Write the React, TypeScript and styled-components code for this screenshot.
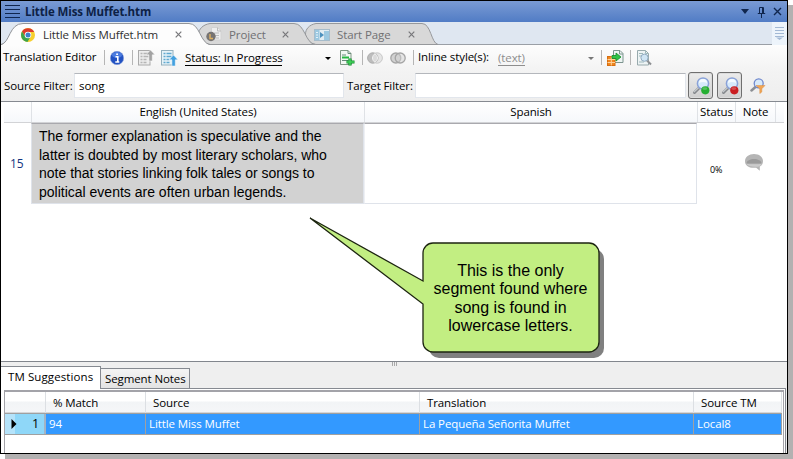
import React from 'react';
import styled, { createGlobalStyle, css } from 'styled-components';

const GlobalStyle = createGlobalStyle`
  * { box-sizing: border-box; }
  body {
    margin: 0;
    height: 459px;
    background: #fff;
    overflow: hidden;
    font-family: "Open Sans", "Noto Sans", sans-serif;
    font-size: 11.5px;
    letter-spacing: -0.1px;
    color: #000;
    white-space: nowrap;
  }
  svg { display: block; flex: none; }
`;

const Page = styled.main`
  height: 459px;
`;

const Window = styled.div`
  position: relative;
  width: 788px;
  height: 454px;
  display: flex;
  flex-direction: column;
  border: 1px solid #000;
  background: #fff;
  box-shadow: 5px 5px 0 #b3b1b1;
`;

const TitleBar = styled.header`
  height: 21px;
  flex: none;
  display: flex;
  align-items: center;
  padding: 0 5px 0 4px;
  background: linear-gradient(#7a9bd4, #517cc5);
  color: #0d2145;
`;

const Title = styled.h1`
  margin: 0 auto 0 5px;
  font-size: 11.5px;
  font-weight: 700;
  line-height: 21px;
`;

const TitleActions = styled.div`
  display: flex;
  align-items: center;
  gap: 7px;
`;

const TabStrip = styled.nav`
  height: 23px;
  flex: none;
  display: flex;
  background: #dfe7f1;
  box-shadow: inset 0 -1px #9a9fa6;
`;

const TabItem = styled.div<{ $width: number; $overlap?: number; $pad: number; $level: number; $active?: boolean }>`
  position: relative;
  z-index: ${p => p.$level};
  display: flex;
  align-items: center;
  width: ${p => p.$width}px;
  margin-left: -${p => p.$overlap ?? 0}px;
  padding: 2px 0 0 ${p => p.$pad}px;
  color: ${p => (p.$active ? '#303030' : '#707073')};
`;

const TabShape = styled.svg`
  position: absolute;
  inset: 0;
  z-index: -1;
`;

const TabIcon = styled.span<{ $w: number }>`
  width: ${p => p.$w}px;
`;

const TabText = styled.span<{ $w: number }>`
  width: ${p => p.$w}px;
  line-height: 20px;
`;

const StripMenu = styled.div`
  width: 15px;
  margin-left: auto;
  display: flex;
  justify-content: center;
  padding-top: 5px;
  background: #edf4fb;
`;

const Toolbar = styled.div`
  height: 26px;
  flex: none;
  display: flex;
  align-items: center;
  padding: 0 0 2px 2px;
  background: linear-gradient(#fdfdfd, #f3f3f3);
`;

const Label = styled.span<{ $w: number }>`
  flex: none;
  width: ${p => p.$w}px;
  line-height: 24px;
`;

const Separator = styled.i<{ $before: number; $after: number }>`
  flex: none;
  width: 1px;
  height: 15px;
  margin: 1px ${p => p.$after}px 0 ${p => p.$before}px;
  background: #b5b5b5;
`;

const DropText = styled.span<{ $w: number; $muted?: boolean }>`
  flex: none;
  margin-top: 2px;
  line-height: 14px;
  width: ${p => p.$w}px;
  color: ${p => (p.$muted ? '#8e8e8e' : '#000')};
  border-bottom: 1px solid currentColor;
`;

const Caret = styled.i<{ $before: number; $after: number; $muted?: boolean }>`
  flex: none;
  margin: 2px ${p => p.$after}px 0 ${p => p.$before}px;
  border: 3px solid transparent;
  border-top-color: ${p => (p.$muted ? '#777' : '#000')};
  border-bottom: 0;
`;

const Slot = styled.span<{ $w: number }>`
  flex: none;
  width: ${p => p.$w}px;
  padding-top: 1px;
`;

const FilterBar = styled.div`
  height: 31px;
  flex: none;
  display: flex;
  align-items: center;
  padding: 0 0 1px 3px;
  background: linear-gradient(#f3f3f3, #eee);
  border-bottom: 1px solid #868a91;
`;

const Field = styled.div<{ $w: number; $gap: number }>`
  flex: none;
  width: ${p => p.$w}px;
  height: 25px;
  margin-right: ${p => p.$gap}px;
  padding: 0 4px;
  line-height: 23px;
  background: #fff;
  border: 1px solid #e2e6ec;
  border-top-color: #b4b7bc;
`;

const ToggleButton = styled.button`
  flex: none;
  width: 25px;
  height: 27px;
  margin: 0 4px 0 0;
  padding: 0 0 0 1px;
  display: flex;
  align-items: center;
  justify-content: center;
  border: 1px solid #6f6f6f;
  border-radius: 3px;
  background: linear-gradient(#ececec, #cfcfcf);
  box-shadow: inset 0 0 0 1px #dcdcdc;
`;

const FilterAction = styled.span`
  margin-left: 4px;
`;

const Grid = styled.div`
  flex: 1;
  padding-left: 3px;
`;

const columns = css`
  display: grid;
  grid-template-columns: 27px 333px 333px 38px 40px 9px;
`;

const GridHead = styled.div`
  ${columns}
  height: 21px;
  background: linear-gradient(#fff, #f6f8fb);
  border-bottom: 1px solid #d2d3d6;
  width: 780px;
`;

const HeadCell = styled.div`
  text-align: center;
  line-height: 20px;
  border-left: 1px solid #dfe2e6;
  &:first-child { border: 0; }
`;

const GridRow = styled.div`
  ${columns}
  grid-template-rows: 81px;
  height: 81px;
`;

const RowNumber = styled.div`
  padding-left: 6px;
  line-height: 81px;
  font-size: 12px;
  color: #14357f;
`;

const SourceCell = styled.div`
  padding: 3px 0 0 7px;
  background: #d2d2d2;
  border: 1px solid #dfe3ea;
  border-top-color: #a9a9ae;
  font: 14px/18.7px "Liberation Sans", Arial, sans-serif;
  letter-spacing: 0;
`;

const TargetCell = styled.div`
  border: 1px solid #dfe3ea;
  border-top-color: #a9a9ae;
  border-left-color: #eef0f4;
`;

const StatusCell = styled.div`
  padding-left: 13px;
  line-height: 93px;
  font-size: 9px;
  letter-spacing: -0.2px;
`;

const NoteCell = styled.div`
  padding: 31px 0 0 9px;
`;

const LowerPane = styled.section`
  height: 92px;
  flex: none;
  display: flex;
  flex-direction: column;
  background: #efefef;
  border-top: 1px solid #82868d;
`;

const Splitter = styled.div`
  height: 4px;
  flex: none;
  padding-left: 391px;
`;

const Grip = styled.div`
  width: 5px;
  height: 4px;
  background: repeating-linear-gradient(90deg, #a9a9a9 0 1px, #efefef 1px 2px);
`;

const LowerTabs = styled.div`
  height: 23px;
  flex: none;
  display: flex;
  align-items: flex-end;
  box-shadow: inset 0 -1px #868a91;
  width: 785px;
`;

const LowerTab = styled.div<{ $active?: boolean; $w: number }>`
  width: ${p => p.$w}px;
  height: ${p => (p.$active ? 23 : 21)}px;
  border: 1px solid #868a91;
  border-left: 0;
  line-height: 20px;
  ${p =>
    p.$active
      ? css`
          padding-left: 7px;
          border-bottom: 0;
          background: #fff;
          letter-spacing: 0.1px;
        `
      : css`
          padding-left: 4px;
          background: linear-gradient(#f4f4f4, #e3e3e3);
        `}
`;

const TableFrame = styled.div`
  flex: 1;
  width: 785px;
  padding: 1px 1px 0 3px;
  background: #fff;
  border-right: 1px solid #868a91;
`;

const Table = styled.div`
  height: 100%;
  border: solid #a3a3a9;
  border-width: 2px 1px 0 1px;
  padding-right: 1px;
`;

const matchColumns = css`
  display: grid;
  grid-template-columns: 41px 100px 274px 274px 1fr;
`;

const MatchHead = styled.div`
  ${matchColumns}
  height: 21px;
  background: linear-gradient(#fff 45%, #f2f4f6 50%, #f5f6f8);
  border-bottom: 1px solid #d5d6d8;
  line-height: 21px;
`;

const MatchHeadCell = styled.div`
  padding-left: 7px;
  border-right: 1px solid #dcdfe3;
`;

const MatchRow = styled.div`
  ${matchColumns}
  height: 22px;
  background: #39f;
  color: #fff;
  line-height: 20px;
  border-top: 1px solid #a0a0a0;
  border-bottom: 1px solid #a0a0a0;
`;

const MatchCell = styled.div`
  padding-left: 3px;
  border-right: 1px solid #a0a0a0;
`;

const RowHandle = styled.div`
  display: flex;
  align-items: center;
  justify-content: space-between;
  padding: 0 5px 0 6px;
  color: #000;
  font-size: 12.5px;
  background: linear-gradient(90deg, #b5e3fa 0 10px, #8fd7f8 10px);
  border-right: 2px solid #a3b4c4;
`;

const Callout = styled.aside`
  position: absolute;
  left: 308px;
  top: 215px;
  width: 298px;
  height: 144px;
  display: flex;
  padding: 46px 0 0 113px;
`;

const CalloutShape = styled.svg`
  position: absolute;
  inset: 0;
`;

const CalloutText = styled.p`
  position: relative;
  margin: 0;
  width: 177px;
  text-align: center;
  font: 16px/18.3px "Liberation Sans", Arial, sans-serif;
  letter-spacing: 0;
`;

const Close = () => (
  <svg width="7" height="7" viewBox="0 0 7 7" stroke="#77777a" strokeWidth="1.2">
    <path d="M.7.7l5.6 5.6M6.3.7L.7 6.3" />
  </svg>
);

const MenuIcon = () => (
  <svg width="15" height="15" viewBox="0 0 15 15" stroke="#10264e" strokeWidth="1">
    <path d="M0 1.5h15M0 5.5h15M0 9.5h15M0 13.5h15" />
  </svg>
);

const ChromeIcon = () => (
  <svg width="14" height="14" viewBox="0 0 14 14">
    <circle cx="7" cy="7" r="7" fill="#f7cf2d" />
    <path d="M1 3.5A7 7 0 0 1 13.2 4H7L4.3 8.4z" fill="#dc3b2c" />
    <path d="M1 3.5A7 7 0 0 0 6.4 14L9.6 8.8 4.4 8.8z" fill="#3da44b" />
    <circle cx="7" cy="7" r="3.3" fill="#fff" />
    <circle cx="7" cy="7" r="2.5" fill="#3f7fcb" />
  </svg>
);

const ProjectIcon = () => (
  <svg width="16" height="15" viewBox="0 0 16 15">
    <path d="M5.5.5h6l3.5 3V13H5.5z" fill="#eee" stroke="#d2d2d2" />
    <path d="M11.5.5V4H15M8 6h5M8 8.500h5M10 11h3" fill="none" stroke="#bcbcbc" />
    <circle cx="5" cy="9.500" r="4.700" fill="#777473" />
    <path d="M4 7v4.500h3" fill="none" stroke="#e0b261" strokeWidth="1.400" />
  </svg>
);

const StartIcon = () => (
  <svg width="16" height="12" viewBox="0 0 16 12">
    <rect x=".5" y=".5" width="15" height="11" fill="#e3edf2" stroke="#a6bccb" />
    <path d="M1 1h4.500v10H1zM10 2h5v9h-5z" fill="#9cc8e0" />
    <path d="M6 3v6l4-3z" fill="#4e91bd" />
    <path d="M2 3.500h2M2 6h2M2 8.500h2" stroke="#e4f2f9" />
  </svg>
);

const InfoIcon = () => (
  <svg width="14" height="14" viewBox="0 0 14 14">
    <circle cx="7" cy="7" r="6.7" fill="#2352c2" stroke="#8ba3dc" strokeWidth=".6" />
    <ellipse cx="7" cy="4" rx="5" ry="3" fill="#4c7ce0" />
    <path d="M5.500 5.800h2.300V11M5.300 11h4M6.200 3.200h1.800" stroke="#fff" strokeWidth="1.600" fill="none" />
  </svg>
);

const ListUpIcon = ({ color, arrow, paper, lines, rise = 0 }: { color: string; arrow: string; paper: string; lines: string; rise?: number }) => (
  <svg width="17" height="16" viewBox="0 0 17 16">
    <rect x=".5" y=".5" width="11.500" height="14.500" fill={paper} stroke={color} />
    <path d="M2.500 3.500h2M5.500 3.500h5M2.500 6.500h2M5.500 6.500h5M2.500 9.500h2M5.500 9.500h3M2.500 12.500h2M5.500 12.500h3" stroke={lines} strokeWidth="1.500" />
    <path d={`M12.500 ${5 - rise}l4.500 4.800h-2.700V${16 - rise}h-3.400V${9.8 - rise}H8z`} fill={arrow} stroke="#fff" strokeWidth=".5" />
  </svg>
);

const AddDocIcon = () => (
  <svg width="15" height="16" viewBox="0 0 15 16">
    <path d="M.500.500h7.500l3 3v11H.500z" fill="#f2f8f3" stroke="#809885" />
    <path d="M8 .500v3h3M2 5h4M2 10.500h6" stroke="#688b7b" fill="none" />
    <path d="M2 7.500h7" stroke="#28b942" strokeWidth="2" />
    <path d="M10 8.500v7M6.500 12h8" stroke="#0d8a28" strokeWidth="3.200" />
    <path d="M10 9v6M7 12h7" stroke="#43d35b" strokeWidth="1.500" />
  </svg>
);

const CirclesIcon = ({ join }: { join?: boolean }) => (
  <svg width="16" height="12" viewBox="0 0 16 12">
    {join ? (
      <g fill="#d2d2d2" stroke="#a5a5a5" strokeWidth="1.300">
        <circle cx="5.800" cy="6" r="5" />
        <circle cx="10.200" cy="6" r="5" fillOpacity=".5" />
      </g>
    ) : (
      <g strokeWidth="1">
        <circle cx="10.200" cy="6" r="5.200" fill="#e5e5e5" stroke="#c8c8c8" />
        <circle cx="5.800" cy="6" r="5.200" fill="#bdbdbd" stroke="#acacac" />
        <path d="M8 1.700a5 5 0 0 1 0 8.600 5 5 0 0 1 0-8.600" fill="#dadada" stroke="#f4f4f4" />
      </g>
    )}
  </svg>
);

const TransferIcon = () => (
  <svg width="17" height="16" viewBox="0 0 17 16">
    <path d="M6.500.500h6.500l3 3v9H6.500z" fill="#eef5f3" stroke="#7d948f" />
    <path d="M12.500.500V4H16" stroke="#7d948f" fill="none" />
    <rect x=".500" y="6.500" width="7.500" height="9" fill="#f0851e" stroke="#d66e10" />
    <path d="M.500 9.500H8M.500 12.500H8M4.300 6.500v9" stroke="#ffd39a" />
    <path d="M5 5.500h4V3l5 4-5 4V8.500H5z" fill="#2fc347" stroke="#128c28" strokeWidth=".8" />
  </svg>
);

const PreviewIcon = () => (
  <svg width="15" height="16" viewBox="0 0 15 16">
    <path d="M.500.500h8l3 3v11.500H.500z" fill="#edf3f4" stroke="#98aaad" />
    <path d="M8.500.500v3h3M2 3.500h4M2 6h2M2 12h5" stroke="#9db8bb" fill="none" />
    <path d="M10 10.500l4 4" stroke="#8d8f92" strokeWidth="2" />
    <circle cx="7.500" cy="7.700" r="3.600" fill="#cfe5f4" stroke="#91aac0" />
  </svg>
);

const SearchIcon = ({ dot }: { dot: string }) => (
  <svg width="19" height="18" viewBox="0 0 19 18">
    <path d="M8 10L2.500 15.500" stroke="#85888c" strokeWidth="3" strokeLinecap="round" />
    <path d="M7.500 9.700L2.200 14.800" stroke="#c4c8cc" strokeWidth="1.300" strokeLinecap="round" />
    <circle cx="11" cy="6.500" r="5.600" fill="#d7eafb" stroke="#8aa2d8" strokeWidth="1.500" />
    <path d="M7 6a4 4 0 0 1 8 0q-4-2-8 0" fill="#f5fbff" />
    <circle cx="13.300" cy="13.300" r="4.100" fill={dot} />
    <ellipse cx="12.800" cy="11.600" rx="2.500" ry="1.400" fill="#fff" opacity=".22" />
  </svg>
);

const SearchFilterIcon = () => (
  <svg width="16" height="16" viewBox="0 0 16 16">
    <path d="M6 8.500l-4.500 4" stroke="#8c8f94" strokeWidth="2.500" strokeLinecap="round" />
    <circle cx="8.700" cy="5.300" r="4.500" fill="#d8eafa" stroke="#7189cd" strokeWidth="1.300" />
    <path d="M6 7.500h9l-3.200 3.300V14l-2 1.500v-4.700z" fill="#f3a553" stroke="#d98c42" strokeWidth=".5" />
  </svg>
);

const NoteIcon = () => (
  <svg width="20" height="18" viewBox="0 0 20 18">
    <path d="M10 0c5 0 9 2.800 9 7 0 2.900-1.300 4.600-3.200 5.600v4.200l-3.600-3.100C5 14.500 1 11.600 1 7.200 1 2.900 5 0 10 0z" fill="#b5b5b5" />
    <path d="M2.500 9.500c0-6 15-6 15 0z" fill="#9a9a9a" />
    <path d="M2 9.800q8 1 16 0-1.500 2.600-4 3-9 .5-12-3z" fill="#cbcbcb" />
  </svg>
);

export default function App() {
  return (
    <Page>
      <GlobalStyle />
      <Window>
        <TitleBar>
          <MenuIcon />
          <Title>Little Miss Muffet.htm</Title>
          <TitleActions>
            <svg width="10" height="5" viewBox="0 0 10 5"><path d="M1 0h8L5 5z" fill="#10264e" /></svg>
            <svg width="9" height="12" viewBox="0 0 9 12" fill="none" stroke="#10264e"><path d="M2.500 7V1.500h4V7M5.500 1.500V7M.800 7.500h7.400M4.500 8v4" /></svg>
            <svg width="9" height="9" viewBox="0 0 9 9" stroke="#10264e" strokeWidth="1.400"><path d="M1 1l7 7M8 1L1 8" /></svg>
          </TitleActions>
        </TitleBar>

        <TabStrip>
          <TabItem $width={210} $pad={20} $level={3} $active>
            <TabShape width="210" height="23" viewBox="0 0 210 23">
              <path d="M0 23C9 21 8 1.500 22 1.500H188C199 1.500 199 21 209 23z" fill="#fdfdfd" />
              <path d="M0 22.500C9 21 8 1.500 22 1.500H188C199 1.500 199 21 209 22.500" fill="none" stroke="#929498" />
            </TabShape>
            <TabIcon $w={22}><ChromeIcon /></TabIcon>
            <TabText $w={132}>Little Miss Muffet.htm</TabText>
            <Close />
          </TabItem>
          <TabItem $width={118} $overlap={13} $pad={8} $level={2}>
            <TabShape width="118" height="23" viewBox="0 0 118 23">
              <path d="M10 22.500C-3 20-3 4 12 1.500H96C107 1.500 107 21 117 22.500z" fill="#d8d8d8" stroke="#96989b" />
            </TabShape>
            <TabIcon $w={23}><ProjectIcon /></TabIcon>
            <TabText $w={53}>Project</TabText>
            <Close />
          </TabItem>
          <TabItem $width={134} $overlap={12} $pad={10} $level={1}>
            <TabShape width="134" height="23" viewBox="0 0 134 23">
              <path d="M12 22.500C-2 20-2 4 12 1.500H118C127 1.500 127 21 134 22.500z" fill="#d8d8d8" stroke="#96989b" />
            </TabShape>
            <TabIcon $w={23}><StartIcon /></TabIcon>
            <TabText $w={71}>Start Page</TabText>
            <Close />
          </TabItem>
          <StripMenu>
            <svg width="9" height="14" viewBox="0 0 9 14" stroke="#a3b9d5"><path d="M0 .500h9M0 3.500h9M0 6.500h9M0 9.500h9" /><path d="M1 10.500h7L4.500 13z" fill="#a3b9d5" stroke="none" /></svg>
          </StripMenu>
        </TabStrip>

        <Toolbar>
          <Label $w={95}>Translation Editor</Label>
          <Separator $before={6} $after={5} />
          <Slot $w={14}><InfoIcon /></Slot>
          <Separator $before={8} $after={5} />
          <Slot $w={23}><ListUpIcon color="#aaa" arrow="#a3a3a3" paper="#ededed" lines="#b5b5b5" rise={5} /></Slot>
          <Slot $w={24}><ListUpIcon color="#93b0be" arrow="#42a0df" paper="#e7f3f8" lines="#60a9d0" /></Slot>
          <DropText $w={97}>Status: In Progress</DropText>
          <Caret $before={43} $after={9} />
          <Slot $w={22}><AddDocIcon /></Slot>
          <Separator $before={0} $after={4} />
          <Slot $w={23}><CirclesIcon /></Slot>
          <Slot $w={16}><CirclesIcon join /></Slot>
          <Separator $before={7} $after={4} />
          <Label $w={80}>Inline style(s):</Label>
          <DropText $w={27} $muted>(text)</DropText>
          <Caret $before={63} $after={0} $muted />
          <Separator $before={7} $after={5} />
          <Slot $w={17}><TransferIcon /></Slot>
          <Separator $before={6} $after={6} />
          <Slot $w={15}><PreviewIcon /></Slot>
        </Toolbar>

        <FilterBar>
          <Label $w={70}>Source Filter:</Label>
          <Field $w={270} $gap={3}>song</Field>
          <Label $w={68}>Target Filter:</Label>
          <Field $w={271} $gap={2} />
          <ToggleButton aria-label="Match source case"><SearchIcon dot="#25af32" /></ToggleButton>
          <ToggleButton aria-label="Clear filter"><SearchIcon dot="#ca1d20" /></ToggleButton>
          <FilterAction><SearchFilterIcon /></FilterAction>
        </FilterBar>

        <Grid>
          <GridHead>
            <HeadCell />
            <HeadCell>English (United States)</HeadCell>
            <HeadCell>Spanish</HeadCell>
            <HeadCell>Status</HeadCell>
            <HeadCell>Note</HeadCell>
            <HeadCell />
          </GridHead>
          <GridRow>
            <RowNumber>15</RowNumber>
            <SourceCell>
              The former explanation is speculative and the<br />
              latter is doubted by most literary scholars, who<br />
              note that stories linking folk tales or songs to<br />
              political events are often urban legends.
            </SourceCell>
            <TargetCell />
            <StatusCell>0%</StatusCell>
            <NoteCell><NoteIcon /></NoteCell>
          </GridRow>
        </Grid>

        <LowerPane>
          <Splitter><Grip /></Splitter>
          <LowerTabs>
            <LowerTab $active $w={100}>TM Suggestions</LowerTab>
            <LowerTab $w={89}>Segment Notes</LowerTab>
          </LowerTabs>
          <TableFrame>
            <Table>
              <MatchHead>
                <MatchHeadCell />
                <MatchHeadCell>% Match</MatchHeadCell>
                <MatchHeadCell>Source</MatchHeadCell>
                <MatchHeadCell>Translation</MatchHeadCell>
                <MatchHeadCell>Source TM</MatchHeadCell>
              </MatchHead>
              <MatchRow>
                <RowHandle>
                  <svg width="6" height="10" viewBox="0 0 6 10"><path d="M.500 0L5.500 5l-5 5z" /></svg>
                  1
                </RowHandle>
                <MatchCell>94</MatchCell>
                <MatchCell>Little Miss Muffet</MatchCell>
                <MatchCell>La Pequeña Señorita Muffet</MatchCell>
                <MatchCell>Local8</MatchCell>
              </MatchRow>
            </Table>
          </TableFrame>
        </LowerPane>

        <Callout>
          <CalloutShape width="298" height="144" viewBox="0 0 298 144">
            <rect x="120" y="33" width="175" height="109" rx="10" fill="#808080" />
            <path d="M124 27H280A10 10 0 0 1 290 37V126A10 10 0 0 1 280 136H124A10 10 0 0 1 114 126V88L1 2 114 65V37A10 10 0 0 1 124 27z" fill="#c2ee82" stroke="#1c2410" strokeWidth="1.300" />
          </CalloutShape>
          <CalloutText>
            This is the only<br />segment found where<br />song is found in<br />lowercase letters.
          </CalloutText>
        </Callout>
      </Window>
    </Page>
  );
}
